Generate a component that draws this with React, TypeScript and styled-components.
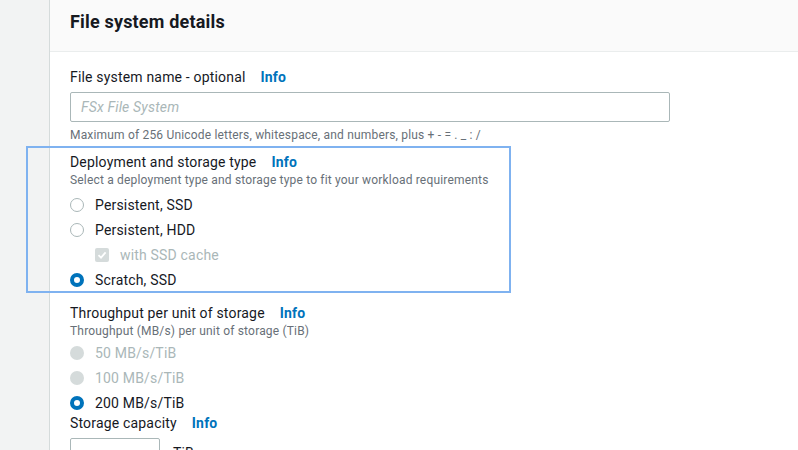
import styled, { createGlobalStyle } from 'styled-components'

const GlobalStyle = createGlobalStyle`
	html, body {
		margin: 0;
		padding: 0;
		background: #ffffff;
		font-family: Roboto, "Liberation Sans", sans-serif;
		color: #16191f;
		letter-spacing: 0.18px;
	}
`

const Page = styled.div`
	display: flex;
	width: 798px;
	height: 450px;
	overflow: hidden;
`

const Sidebar = styled.div`
	width: 49px;
	flex-shrink: 0;
	background: #f2f3f3;
	border-right: 1px solid #d5dbdb;
`

const Main = styled.div`
	flex: 1;
	display: flex;
	flex-direction: column;
`

const Header = styled.div`
	height: 52px;
	flex-shrink: 0;
	box-sizing: border-box;
	display: flex;
	align-items: center;
	padding: 0 20px 8px;
	background: #fafafa;
	border-bottom: 1px solid #eaeded;
`

const Title = styled.h2`
	margin: 0;
	font-size: 18px;
	font-weight: 700;
	color: #16191f;
`

const Body = styled.div`
	display: flex;
	flex-direction: column;
	padding: 15px 20px 0;
`

const Section = styled.div<{ $gap?: number }>`
	position: relative;
	display: flex;
	flex-direction: column;
	flex-shrink: 0;
	margin-top: ${(p) => p.$gap ?? 0}px;
`

const Highlight = styled.div`
	position: absolute;
	left: -44px;
	top: -6px;
	width: 485px;
	height: 147px;
	box-sizing: border-box;
	border: 2px solid #7fb2f0;
	pointer-events: none;
`

const Label = styled.div`
	display: flex;
	align-items: center;
	font-size: 14px;
	line-height: 20px;
	color: #16191f;
`

const Info = styled.a`
	margin-left: 15px;
	font-weight: 700;
	color: #0073bb;
	text-decoration: none;
`

const Hint = styled.div<{ $gap?: number }>`
	font-size: 12px;
	line-height: 16px;
	color: #687078;
	margin-top: ${(p) => p.$gap ?? 0}px;
`

const Input = styled.div<{ $width: number }>`
	width: ${(p) => p.$width}px;
	height: 30px;
	flex-shrink: 0;
	box-sizing: border-box;
	border: 1px solid #aab7b8;
	border-radius: 2px;
	display: flex;
	align-items: center;
	padding: 0 10px;
	font-size: 14px;
	font-style: italic;
	color: #aab7b8;
`

const InputRow = styled.div`
	display: flex;
	align-items: center;
	gap: 13px;
	margin-top: 5px;
	font-size: 14px;
	color: #16191f;
`

const Options = styled.div<{ $gap?: number }>`
	display: flex;
	flex-direction: column;
	gap: 3px;
	margin-top: ${(p) => p.$gap ?? 0}px;
`

const Option = styled.div<{ $indent?: boolean; $disabled?: boolean }>`
	display: flex;
	align-items: center;
	gap: 11px;
	height: 22px;
	padding-left: ${(p) => (p.$indent ? 25 : 0)}px;
	font-size: 14px;
	color: ${(p) => (p.$disabled ? '#aab7b8' : '#16191f')};
`

type RadioState = 'off' | 'on' | 'disabled'

const Radio = styled.span<{ $state: RadioState }>`
	width: 14px;
	height: 14px;
	box-sizing: border-box;
	border-radius: 50%;
	flex-shrink: 0;
	background: ${(p) => (p.$state === 'disabled' ? '#d5dbdb' : '#ffffff')};
	border: ${(p) =>
		p.$state === 'on' ? '4px solid #0073bb' : p.$state === 'disabled' ? 'none' : '1.5px solid #aab7b8'};
`

const Check = styled.span`
	width: 14px;
	height: 14px;
	border-radius: 2px;
	background: #d5dbdb;
	display: flex;
	align-items: center;
	justify-content: center;
	flex-shrink: 0;
`

const App = (): JSX.Element => {
	return (
		<>
			<GlobalStyle />
			<Page>
				<Sidebar />
				<Main>
					<Header>
						<Title>File system details</Title>
					</Header>
					<Body>
						<Section>
							<Label>
								File system name - optional <Info>Info</Info>
							</Label>
							<InputRow>
								<Input $width={600}>FSx File System</Input>
							</InputRow>
							<Hint $gap={5}>Maximum of 256 Unicode letters, whitespace, and numbers, plus + - = . _ : /</Hint>
						</Section>

						<Section $gap={9}>
							<Highlight />
							<Label>
								Deployment and storage type <Info>Info</Info>
							</Label>
							<Hint>Select a deployment type and storage type to fit your workload requirements</Hint>
							<Options $gap={6}>
								<Option>
									<Radio $state="off" />
									Persistent, SSD
								</Option>
								<Option>
									<Radio $state="off" />
									Persistent, HDD
								</Option>
								<Option $indent $disabled>
									<Check>
										<svg width="10" height="10" viewBox="0 0 10 10">
											<path d="M1.5 5.2 L4 7.6 L8.6 2.4" fill="none" stroke="#fff" strokeWidth="1.8" />
										</svg>
									</Check>
									with SSD cache
								</Option>
								<Option>
									<Radio $state="on" />
									Scratch, SSD
								</Option>
							</Options>
						</Section>

						<Section $gap={12}>
							<Label>
								Throughput per unit of storage <Info>Info</Info>
							</Label>
							<Hint>Throughput (MB/s) per unit of storage (TiB)</Hint>
							<Options $gap={3}>
								<Option $disabled>
									<Radio $state="disabled" />
									50 MB/s/TiB
								</Option>
								<Option $disabled>
									<Radio $state="disabled" />
									100 MB/s/TiB
								</Option>
								<Option>
									<Radio $state="on" />
									200 MB/s/TiB
								</Option>
							</Options>
						</Section>

						<Section $gap={-1}>
							<Label>
								Storage capacity <Info>Info</Info>
							</Label>
							<InputRow>
								<Input $width={90} />
								TiB
							</InputRow>
						</Section>
					</Body>
				</Main>
			</Page>
		</>
	)
}

export default App
